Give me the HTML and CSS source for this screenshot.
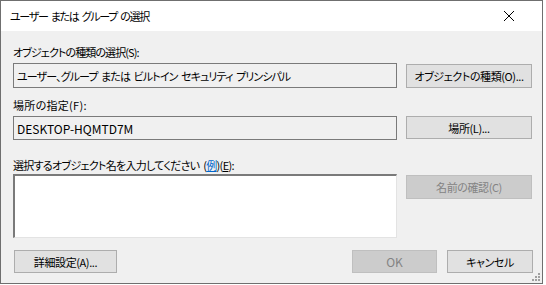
FILE: index.html
```html
<!DOCTYPE html>
<html lang="ja">
<head>
<meta charset="utf-8">
<link rel="stylesheet" href="styles.css">
</head>
<body>
<div class="window">
  <div class="titlebar">
    <span class="title">ユーザー または グループ の選択</span>
    <svg class="close" width="12" height="12" viewBox="0 0 12 12"><path d="M1 1 L11 11 M11 1 L1 11" stroke="#000" stroke-width="1" fill="none"/></svg>
  </div>
  <div class="content">
    <div class="grid">
      <div class="label l1">オブジェクトの種類の選択(S):</div>
      <div class="field f1">ユーザー、グループ または ビルトイン セキュリティ プリンシパル</div>
      <button class="btn b1">オブジェクトの種類(O)...</button>

      <div class="label l2">場所の指定(F):</div>
      <div class="field f2">DESKTOP-HQMTD7M</div>
      <button class="btn b2">場所(L)...</button>

      <div class="label l3">選択するオブジェクト名を入力してください (<span class="link">例</span>)(<span class="ak">E</span>):</div>
      <div class="textarea"></div>
      <button class="btn disabled b3">名前の確認(C)</button>
    </div>
    <div class="footer">
      <button class="btn adv">詳細設定(A)...</button>
      <div class="right">
        <button class="btn disabled ok">OK</button>
        <button class="btn cancel">キャンセル</button>
      </div>
    </div>
  </div>
  <svg class="grip" width="8" height="8" viewBox="0 0 8 8">
    <rect x="6" y="0" width="2" height="2" fill="#a0a0a0"/>
    <rect x="3" y="3" width="2" height="2" fill="#a0a0a0"/>
    <rect x="6" y="3" width="2" height="2" fill="#a0a0a0"/>
    <rect x="0" y="6" width="2" height="2" fill="#a0a0a0"/>
    <rect x="3" y="6" width="2" height="2" fill="#a0a0a0"/>
    <rect x="6" y="6" width="2" height="2" fill="#a0a0a0"/>
  </svg>
</div>
</body>
</html>
```
FILE: styles.css
```css
html, body {
  margin: 0;
  padding: 0;
  background: #ffffff;
}
body {
  font-family: "Noto Sans CJK JP", "Noto Sans", sans-serif;
  font-size: 11px;
  font-feature-settings: "palt";
  letter-spacing: -0.5px;
  color: #000;
}
.window {
  position: relative;
  width: 541px;
  border: 1px solid #6f6f6f;
  background: #f0f0f0;
}
.titlebar {
  height: 30px;
  background: #ffffff;
  display: flex;
  align-items: center;
  justify-content: space-between;
  padding: 0 27px 0 9px;
}
.title {
  line-height: 16px;
  letter-spacing: -1.3px;
  word-spacing: 2px;
}
.close {
  display: block;
}
.content {
  padding: 13px 9px 10px 12px;
}
.grid {
  display: grid;
  grid-template-columns: 384px 126px;
  column-gap: 9px;
}
.label {
  grid-column: 1 / 3;
  line-height: 16px;
  height: 16px;
  white-space: nowrap;
}
.l1 { margin-bottom: 3px; letter-spacing: -0.9px; }
.l2 { margin-top: 9px; margin-bottom: 3px; letter-spacing: 0.3px; }
.l3 { margin-top: 17px; margin-bottom: 1px; word-spacing: 2px; letter-spacing: -0.7px; }
.field {
  box-sizing: border-box;
  border: 1px solid #7a7a7a;
  background: #f0f0f0;
  padding: 0 3px;
  display: flex;
  align-items: center;
  white-space: pre;
  overflow: hidden;
}
.f1 { height: 25px; letter-spacing: -0.9px; word-spacing: 2px; }
.f2 { height: 24px; font-size: 12px; letter-spacing: 0; }
.textarea {
  box-sizing: border-box;
  height: 64px;
  background: #ffffff;
  border-style: solid;
  border-width: 2px 1px 1px 2px;
  border-color: #7a7a7a #e3e3e3 #e3e3e3 #7a7a7a;
}
.btn {
  box-sizing: border-box;
  font-family: inherit;
  font-size: 11px;
  font-feature-settings: "palt";
  letter-spacing: -0.4px;
  color: #000;
  background: #e1e1e1;
  border: 1px solid #adadad;
  padding: 0;
  margin: 0;
  height: 24px;
  line-height: 16px;
  white-space: nowrap;
}
.b1 { align-self: end; }
.b2 { height: 23px; align-self: start; }
.b3 { align-self: start; margin-top: 1px; }
.disabled {
  background: #cccccc;
  border-color: #bfbfbf;
  color: #838383;
}
.ok { font-size: 12px; letter-spacing: 0; }
.link {
  color: #0066cc;
  text-decoration: underline;
}
.ak { text-decoration: underline; }
.footer {
  display: flex;
  justify-content: space-between;
  margin-top: 12px;
  padding-left: 1px;
}
.right {
  display: flex;
  gap: 10px;
}
.adv { width: 103px; height: 23px; }
.ok { width: 85px; height: 23px; }
.cancel { width: 86px; height: 23px; }
.grip {
  position: absolute;
  right: 2px;
  bottom: 2px;
}
```
